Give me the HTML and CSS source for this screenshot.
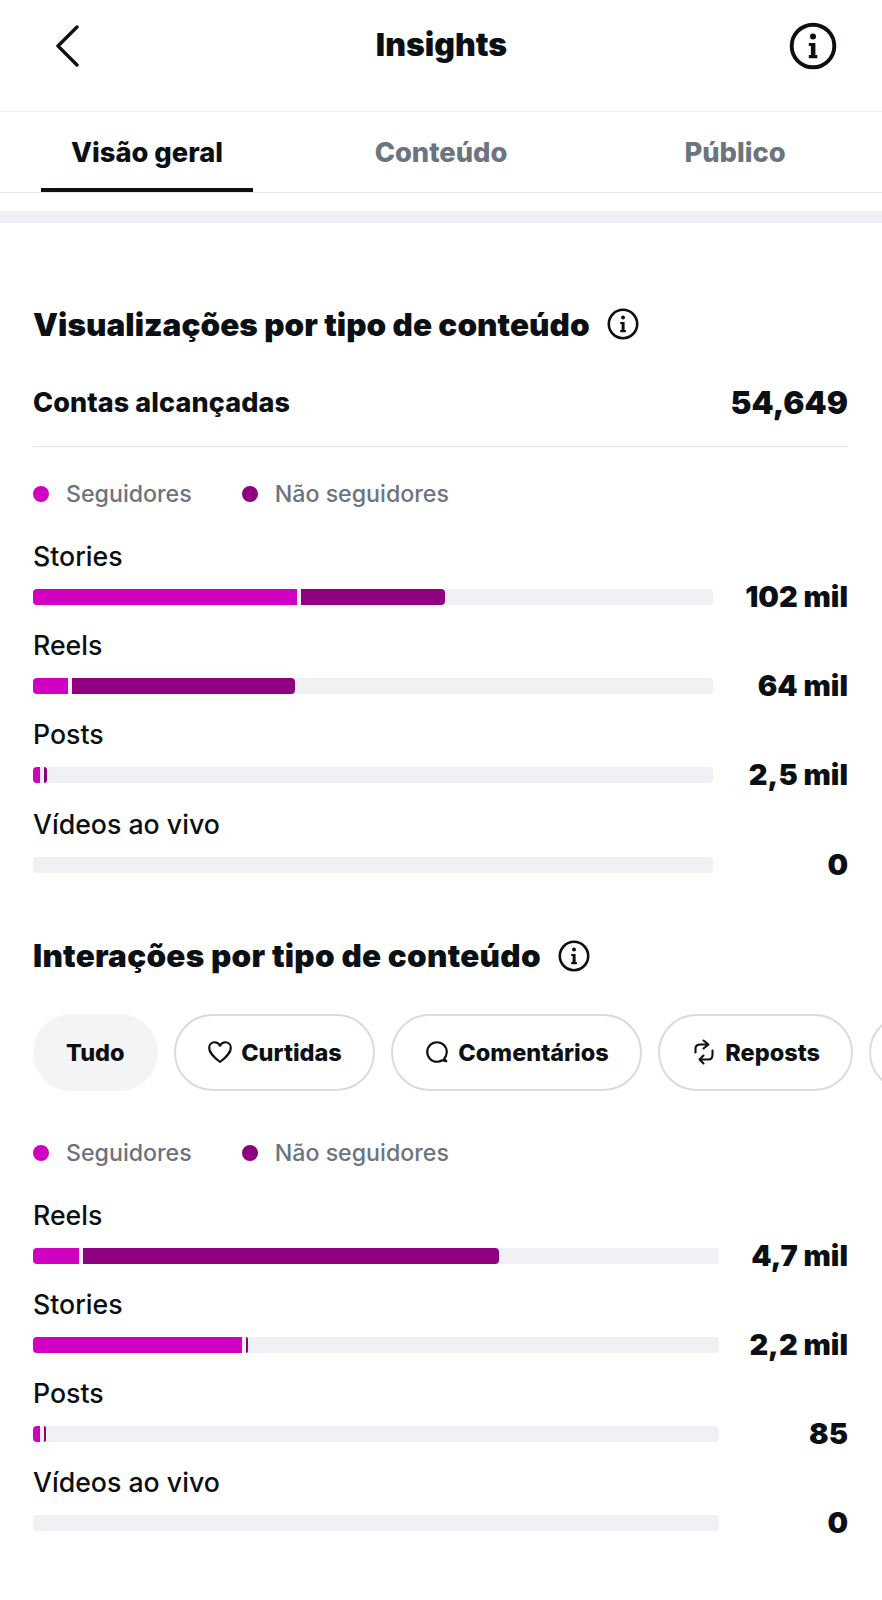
FILE: index.html
```html
<!DOCTYPE html>
<html lang="pt-BR">
<head>
    <meta charset="UTF-8">
    <meta name="viewport" content="width=device-width, initial-scale=1.0">
    <title>Insights</title>
    <link rel="stylesheet" href="styles.css">
</head>
<body>

<header class="top">
    <svg class="back" viewBox="0 0 24 42" width="24" height="42"><path d="M22 2 L3 21 L22 40" fill="none" stroke="#0c1014" stroke-width="3.4" stroke-linecap="round" stroke-linejoin="round"/></svg>
    <h1>Insights</h1>
    <svg class="info info-big" viewBox="0 0 32 32"><use href="#info"/></svg>
</header>

<nav class="tabs">
    <div class="tab active"><span>Visão geral</span></div>
    <div class="tab"><span>Conteúdo</span></div>
    <div class="tab"><span>Público</span></div>
</nav>

<div class="band"></div>

<main class="content">
    <h2 class="first"><span>Visualizações por tipo de conteúdo</span>
        <svg class="info" viewBox="0 0 32 32"><use href="#info"/></svg>
    </h2>
    <div class="reach">
        <span class="reach-label">Contas alcançadas</span>
        <span class="reach-value">54,649</span>
    </div>

    <div class="legend">
        <span class="dot dot-a"></span><span>Seguidores</span>
        <span class="dot dot-b"></span><span>Não seguidores</span>
    </div>

    <div class="chart">
        <div class="row">
            <div class="row-label">Stories</div>
            <div class="track"><i class="seg-a" style="width:264px"></i><i class="seg-b" style="width:144px"></i></div>
            <div class="row-value">102 mil</div>
        </div>
        <div class="row">
            <div class="row-label">Reels</div>
            <div class="track"><i class="seg-a" style="width:35px"></i><i class="seg-b" style="width:223px"></i></div>
            <div class="row-value">64 mil</div>
        </div>
        <div class="row">
            <div class="row-label">Posts</div>
            <div class="track"><i class="seg-a" style="width:7px"></i><i class="seg-b" style="width:3px"></i></div>
            <div class="row-value">2,5 mil</div>
        </div>
        <div class="row">
            <div class="row-label">Vídeos ao vivo</div>
            <div class="track"></div>
            <div class="row-value">0</div>
        </div>
    </div>

    <h2 class="second"><span>Interações por tipo de conteúdo</span>
        <svg class="info" viewBox="0 0 32 32"><use href="#info"/></svg>
    </h2>

    <div class="chips">
        <div class="chip chip-on">Tudo</div>
        <div class="chip">
            <svg class="chip-icon" viewBox="0 0 24 24"><path d="M12 21.2 C7 17 2 13.2 2 8.2 C2 5 4.4 3 7 3 C9.2 3 11 4.2 12 6.2 C13 4.2 14.8 3 17 3 C19.6 3 22 5 22 8.2 C22 13.2 17 17 12 21.2 Z" fill="none" stroke="#0c1014" stroke-width="2" stroke-linejoin="round"/></svg>
            Curtidas
        </div>
        <div class="chip">
            <svg class="chip-icon" viewBox="0 0 24 24"><path d="M18.6 18.2 C20.1 16.6 21 14.4 21 12 C21 7 17 3 12 3 C7 3 3 7 3 12 C3 17 7 21 12 21 C13.8 21 15.4 20.5 16.8 19.6 L20.6 20.6 Z" fill="none" stroke="#0c1014" stroke-width="2" stroke-linejoin="round"/></svg>
            Comentários
        </div>
        <div class="chip">
            <svg class="chip-icon" viewBox="0 0 26 26"><path d="M4.5 13.5 V9.5 Q4.5 5.5 9.5 5.5 H17.5 M12.5 1.5 L17.5 5.5 L12.5 9.5 M21.5 11.5 V15.5 Q21.5 20.5 17.5 20.5 H8.5 M12.5 16.5 L8.5 20.5 L12.5 24.5" fill="none" stroke="#0c1014" stroke-width="2.1" stroke-linecap="round" stroke-linejoin="round"/></svg>
            Reposts
        </div>
        <div class="chip chip-cut"></div>
    </div>

    <div class="legend legend-second">
        <span class="dot dot-a"></span><span>Seguidores</span>
        <span class="dot dot-b"></span><span>Não seguidores</span>
    </div>

    <div class="chart chart-wide">
        <div class="row">
            <div class="row-label">Reels</div>
            <div class="track"><i class="seg-a" style="width:46px"></i><i class="seg-b" style="width:416px"></i></div>
            <div class="row-value">4,7 mil</div>
        </div>
        <div class="row">
            <div class="row-label">Stories</div>
            <div class="track"><i class="seg-a" style="width:209px"></i><i class="seg-b" style="width:2px"></i></div>
            <div class="row-value">2,2 mil</div>
        </div>
        <div class="row">
            <div class="row-label">Posts</div>
            <div class="track"><i class="seg-a" style="width:7px"></i><i class="seg-b" style="width:2px"></i></div>
            <div class="row-value">85</div>
        </div>
        <div class="row">
            <div class="row-label">Vídeos ao vivo</div>
            <div class="track"></div>
            <div class="row-value">0</div>
        </div>
    </div>
</main>

<svg class="defs" width="0" height="0">
    <symbol id="info" viewBox="0 0 32 32">
        <circle cx="16" cy="16" r="14.2" fill="none" stroke="#0c1014" stroke-width="2.6"/>
        <circle cx="16" cy="9.6" r="2" fill="#0c1014"/>
        <path d="M13.2 14 H17.6 V22 H18.9 V24.2 H13.2 V22 H14.6 V16 H13.2 Z" fill="#0c1014"/>
    </symbol>
</svg>

</body>
</html>
```

FILE: styles.css
```css
body {
    margin: 0;
    background-color: #fff;
    color: #0c1014;
    font-family: Inter, "Liberation Sans", sans-serif;
    overflow-x: hidden;
}
.defs {
    position: absolute;
}
.top {
    height: 91px;
    border-bottom: 1px solid #efefef;
    display: grid;
    grid-template-columns: 1fr auto 1fr;
    align-items: center;
    padding: 0 45px 20px 55px;
}
.top h1 {
    margin: 0 0 2px -9px;
    font-size: 32px;
    font-weight: 900;
}
.back {
    display: block;
}
.info {
    width: 32px;
    height: 32px;
    flex: none;
}
.info-big {
    width: 48px;
    height: 48px;
    justify-self: end;
}
.tabs {
    display: grid;
    grid-template-columns: repeat(3, 1fr);
    height: 80px;
    border-bottom: 1px solid #e6e6e6;
}
.tab {
    margin: 0 41px;
    display: flex;
    align-items: center;
    justify-content: center;
    font-size: 27.3px;
    font-weight: 800;
    color: #6c7480;
    white-space: nowrap;
}
.tab.active {
    color: #0c1014;
    box-shadow: inset 0 -4px 0 #0c1014;
}
.band {
    margin-top: 18px;
    height: 12px;
    background-color: #f0f1f5;
}
.content {
    padding: 0 34px 68px 33px;
}
h2 {
    margin: 0;
    height: 40px;
    display: flex;
    align-items: center;
    gap: 17px;
    font-size: 31.5px;
    font-weight: 900;
    white-space: nowrap;
}
h2.first {
    margin-top: 81px;
    letter-spacing: 0.03px;
}
h2.second {
    margin-top: 63px;
    letter-spacing: 0.25px;
}
.reach {
    margin-top: 38px;
    height: 40px;
    padding-bottom: 24px;
    border-bottom: 1px solid #e6e6e6;
    display: flex;
    align-items: center;
    justify-content: space-between;
}
.reach-label {
    font-size: 27px;
    font-weight: 800;
    letter-spacing: 0.1px;
}
.reach-value {
    font-size: 31.5px;
    font-weight: 900;
}
.legend {
    margin-top: 32px;
    height: 30px;
    display: flex;
    align-items: center;
    font-size: 23.2px;
    font-weight: 500;
    color: #6c7480;
}
.legend-second {
    margin-top: 47px;
}
.dot {
    width: 16px;
    height: 16px;
    border-radius: 50%;
    margin-right: 17px;
}
.dot-b {
    margin-left: 50px;
}
.dot-a,
.seg-a {
    background-color: #d100c0;
}
.dot-b,
.seg-b {
    background-color: #8f0080;
}
.chart {
    margin-top: 27px;
    display: flex;
    flex-direction: column;
    gap: 20.2px;
}
.row {
    display: grid;
    grid-template-columns: 680px 1fr;
    row-gap: 13px;
    align-items: center;
}
.chart-wide .row {
    grid-template-columns: 686px 1fr;
}
.row-label {
    grid-column: 1 / 3;
    height: 40px;
    line-height: 41px;
    font-size: 26.7px;
    font-weight: 500;
}
.track {
    height: 16px;
    border-radius: 4px;
    background-color: #f0f1f5;
    display: flex;
    gap: 4px;
    overflow: hidden;
}
.track i {
    display: block;
    height: 100%;
}
.track i:last-child {
    border-radius: 0 4px 4px 0;
}
.row-value {
    height: 16px;
    line-height: 16px;
    text-align: right;
    font-size: 29px;
    font-weight: 900;
}
.chips {
    margin-top: 38px;
    margin-right: -34px;
    display: flex;
    gap: 16.5px;
    overflow: hidden;
}
.chip {
    flex: none;
    height: 73px;
    padding: 0 31px;
    border: 2px solid #dbdbdb;
    border-radius: 39px;
    display: flex;
    align-items: center;
    gap: 8px;
    font-size: 23.5px;
    font-weight: 800;
    white-space: nowrap;
}
.chip-on {
    border-color: #f3f4f6;
    background-color: #f3f4f6;
}
.chip-cut {
    width: 60px;
}
.chip-icon {
    width: 26px;
    height: 26px;
    flex: none;
}
```
